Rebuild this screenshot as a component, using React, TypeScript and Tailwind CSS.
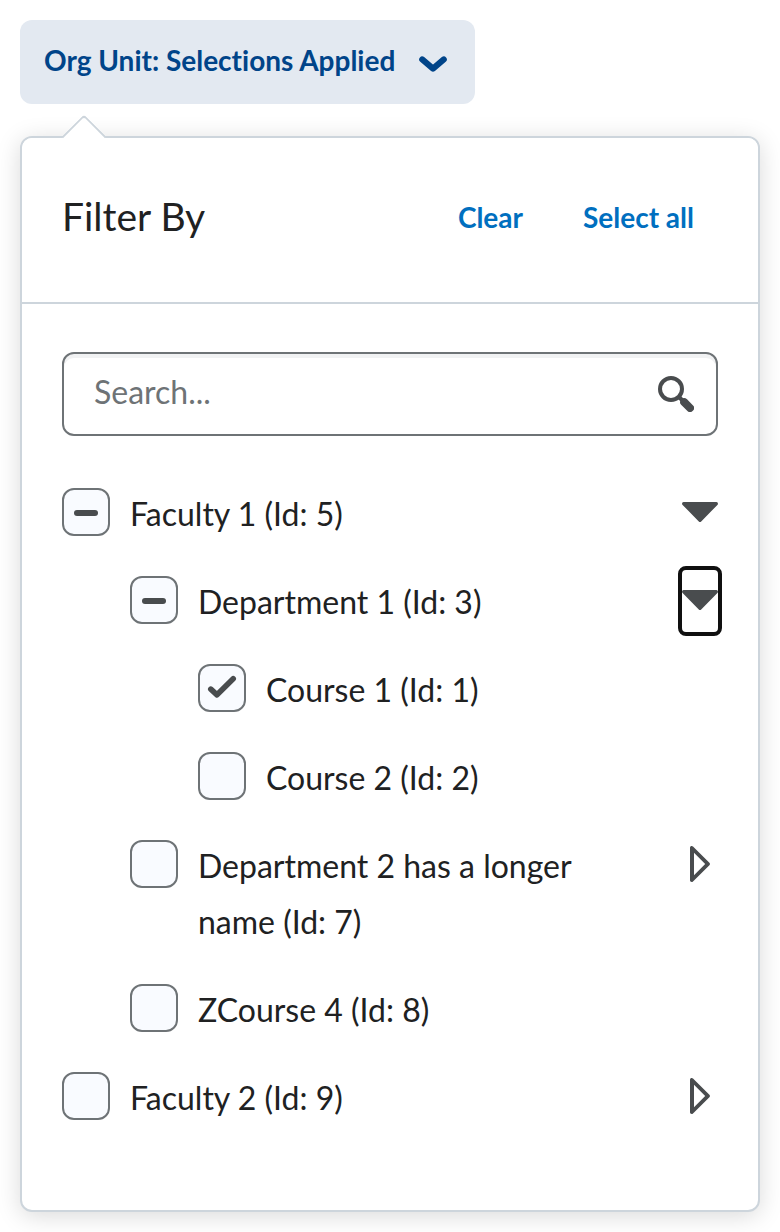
import { useEffect, useRef, useState } from 'react';

type CheckState = 'checked' | 'mixed' | 'unchecked';

interface OrgUnit {
  id: number;
  name: string;
  state: CheckState;
  expanded?: boolean;
  children?: OrgUnit[];
}

const orgUnits: OrgUnit[] = [
  {
    id: 5,
    name: 'Faculty 1',
    state: 'mixed',
    expanded: true,
    children: [
      {
        id: 3,
        name: 'Department 1',
        state: 'mixed',
        expanded: true,
        children: [
          { id: 1, name: 'Course 1', state: 'checked' },
          { id: 2, name: 'Course 2', state: 'unchecked' },
        ],
      },
      { id: 7, name: 'Department 2 has a longer name', state: 'unchecked', children: [] },
      { id: 8, name: 'ZCourse 4', state: 'unchecked' },
    ],
  },
  { id: 9, name: 'Faculty 2', state: 'unchecked', children: [] },
];

const FOCUSED_ID = 3;

function Checkbox({ id, initial }: { id: string; initial: CheckState }) {
  const [state, setState] = useState<CheckState>(initial);
  const ref = useRef<HTMLInputElement>(null);

  useEffect(() => {
    if (ref.current) ref.current.indeterminate = state === 'mixed';
  }, [state]);

  return (
    <span className="relative mt-0.5 size-12 shrink-0">
      <input
        ref={ref}
        id={id}
        type="checkbox"
        checked={state === 'checked'}
        onChange={(e) => setState(e.target.checked ? 'checked' : 'unchecked')}
        className="block size-12 appearance-none rounded-xl border-2 border-[#6e7376] bg-[#f9fbff]"
      />
      <svg
        viewBox="0 0 48 48"
        className="pointer-events-none absolute inset-0 size-12"
        fill="none"
        stroke="#494c4e"
        strokeLinecap="round"
        aria-hidden="true"
      >
        {state === 'mixed' && <path d="M15 25H33" strokeWidth="6" />}
        {state === 'checked' && (
          <path d="M12.8 25.2L19 30.8L35.2 14.8" strokeWidth="5.6" strokeLinejoin="round" />
        )}
      </svg>
    </span>
  );
}

function Caret({ open }: { open: boolean }) {
  return (
    <svg viewBox="0 0 36 36" className="size-9" aria-hidden="true">
      {open ? (
        <path
          d="M1.6 8H34.4C35.8 8 36.5 9.8 35.4 10.9L19.2 27.4C18.5 28.1 17.5 28.1 16.8 27.4L.6 10.9C-.5 9.8 .2 8 1.6 8Z"
          fill="#494c4e"
        />
      ) : (
        <path
          d="M8 1.8C8 .2 9.8-.5 11 .6L27.4 16.8C28.1 17.5 28.1 18.5 27.4 19.2L11 35.4C9.8 36.5 8 35.8 8 34.2ZM12 6.8V29.2L23.2 18Z"
          fill="#494c4e"
          fillRule="evenodd"
        />
      )}
    </svg>
  );
}

function TreeItem({ unit }: { unit: OrgUnit }) {
  const [open, setOpen] = useState(Boolean(unit.expanded));
  const inputId = `org-unit-${unit.id}`;
  return (
    <li>
      <div className="flex items-start justify-between gap-10">
        <label
          htmlFor={inputId}
          className="flex min-w-0 flex-1 items-start gap-5 py-4 leading-14"
        >
          <Checkbox id={inputId} initial={unit.state} />
          <span className="max-w-[400px]">{`${unit.name} (Id: ${unit.id})`}</span>
        </label>
        {unit.children && (
          <button
            type="button"
            aria-expanded={open}
            aria-label={`${open ? 'Collapse' : 'Expand'} ${unit.name}`}
            onClick={() => setOpen(!open)}
            className={
              unit.id === FOCUSED_ID
                ? 'mt-3 flex h-[62px] w-9 shrink-0 items-start rounded-sm pt-3 outline-4 outline-[#101010]'
                : 'mt-3 flex h-[62px] w-9 shrink-0 items-start rounded-sm pt-3'
            }
          >
            <Caret open={open} />
          </button>
        )}
      </div>
      {open && unit.children && unit.children.length > 0 && (
        <ul className="pl-17">
          {unit.children.map((child) => (
            <TreeItem key={child.id} unit={child} />
          ))}
        </ul>
      )}
    </li>
  );
}

export default function App() {
  return (
    <main className="bg-white p-5 font-['Lato',sans-serif] text-[32px] text-[#202122] [font-variant-ligatures:none]">
      <button
        type="button"
        className="flex h-21 items-center gap-6 rounded-xl bg-[#e3e9f1] pr-7 pl-6 text-[28px] leading-9 font-bold text-[#004489]"
      >
        <span className="pb-1">Org Unit: Selections Applied</span>
        <svg viewBox="0 0 28 18" className="mt-1 h-[18px] w-7" fill="none" aria-hidden="true">
          <path
            d="M3.2 4.4L14 13.6L24.8 4.4"
            stroke="#004489"
            strokeWidth="6"
            strokeLinecap="round"
            strokeLinejoin="round"
          />
        </svg>
      </button>

      <section className="relative mt-8 rounded-xl border-2 border-[#cdd5dc] bg-white shadow-[0_4px_24px_rgba(0,0,0,0.15)]">
        <div className="absolute -top-[17px] left-[46px] size-8 rotate-45 rounded-tl-sm border-t-2 border-l-2 border-[#cdd5dc] bg-white" />
        <header className="relative flex h-[166px] items-center justify-between rounded-t-[10px] border-b-2 border-[#cdd5dc] bg-white px-10 pb-1.5">
          <h2 className="pb-0.5 text-[39px] leading-14">Filter By</h2>
          <div className="flex gap-3 text-[28px] leading-9 font-bold text-[#006fbf]">
            <button type="button" className="px-6">
              Clear
            </button>
            <button type="button" className="px-6">
              Select all
            </button>
          </div>
        </header>

        <div className="px-10 pt-12 pb-17">
          <div className="mb-[34px] flex h-21 items-center rounded-xl border-2 border-[#6e7376] pr-[22px] pl-[30px] shadow-[inset_0_4px_0_#f1f2f3]">
            <input
              type="text"
              aria-label="Search"
              placeholder="Search..."
              className="min-w-0 flex-1 bg-transparent pb-1 leading-12 outline-none placeholder:text-[#6e7376]"
            />
            <button type="button" aria-label="Search">
              <svg viewBox="0 0 36 36" className="size-9" aria-hidden="true">
                <circle cx="13" cy="13" r="11" fill="none" stroke="#494c4e" strokeWidth="4" />
                <path d="M20.5 20.5L25 25" stroke="#494c4e" strokeWidth="4" />
                <path d="M26.2 26.2L32 32" stroke="#494c4e" strokeWidth="8" strokeLinecap="round" />
              </svg>
            </button>
          </div>

          <ul>
            {orgUnits.map((unit) => (
              <TreeItem key={unit.id} unit={unit} />
            ))}
          </ul>
        </div>
      </section>
    </main>
  );
}
